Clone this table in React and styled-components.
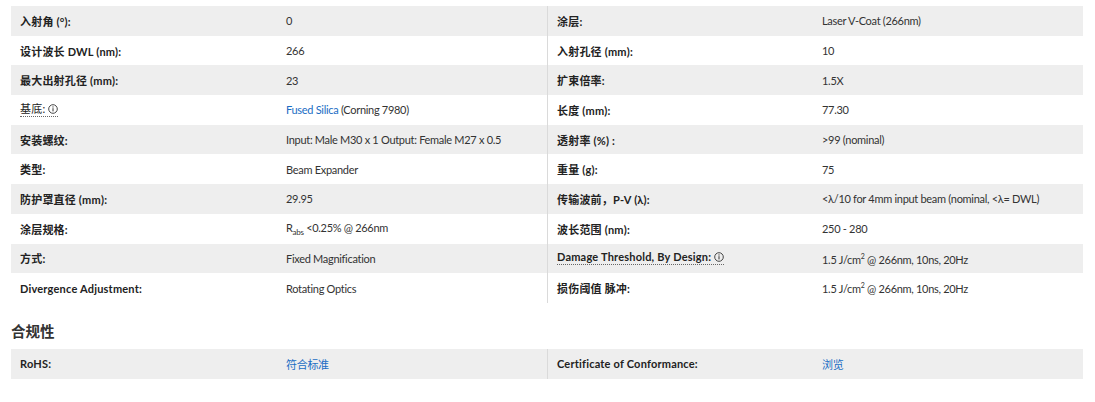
import React from "react";
import styled, { createGlobalStyle } from "styled-components";

const Global = createGlobalStyle`
  html, body { margin: 0; padding: 0; background: #fff; }
  body { font-family: Lato, "Noto Sans CJK SC", sans-serif; color: #333; }
`;

const Page = styled.div`
  padding: 6px 12px 0 11px;
  width: 1072px;
`;

const Table = styled.div`
  display: flex;
  flex-direction: column;
`;

const Row = styled.div`
  display: grid;
  grid-template-columns: 266px 270px 266px 270px;
  height: 29.7px;
  background: ${(p) => (p.$striped ? "#eeeeee" : "#ffffff")};
`;

const Cell = styled.div`
  display: flex;
  align-items: center;
  padding-left: 9px;
  border-left: ${(p) => (p.$divider ? "1px solid #dadada" : "none")};
  font-size: 11px;
  color: ${(p) => (p.$label ? "#222" : "#333")};
  font-weight: ${(p) => (p.$label ? 700 : 400)};
  letter-spacing: ${(p) => (p.$label ? "0.2px" : "-0.3px")};
  white-space: nowrap;
`;

const Tip = styled.span`
  display: inline-flex;
  align-items: center;
  gap: 3px;
  border-bottom: 1px dotted #666;
  padding-bottom: 1px;
  line-height: 12px;
  font-weight: ${(p) => (p.$light ? 400 : 700)};
`;

const Link = styled.a`
  color: #1a6dc4;
  text-decoration: none;
`;

const Sub = styled.sub`
  font-size: 8px;
`;

const Sup = styled.sup`
  font-size: 7px;
`;

const Heading = styled.h3`
  margin: 20px 0 8px;
  font-size: 14.5px;
  font-weight: 700;
  color: #333;
  line-height: 18px;
`;

const InfoIcon = () => (
  <svg width="10" height="10" viewBox="0 0 10 10">
    <circle cx="5" cy="5" r="4.3" fill="none" stroke="#333" strokeWidth="0.9" />
    <line x1="5" y1="4.2" x2="5" y2="7.4" stroke="#333" strokeWidth="1" />
    <circle cx="5" cy="2.9" r="0.6" fill="#333" />
  </svg>
);

const rows = [
  ["入射角 (°):", "0", "涂层:", "Laser V-Coat (266nm)"],
  ["设计波长 DWL (nm):", "266", "入射孔径 (mm):", "10"],
  ["最大出射孔径 (mm):", "23", "扩束倍率:", "1.5X"],
  [
    <Tip key="a" $light>基底: <InfoIcon /></Tip>,
    <span key="b"><Link href="#">Fused Silica</Link> (Corning 7980)</span>,
    "长度 (mm):",
    "77.30",
  ],
  ["安装螺纹:", "Input: Male M30 x 1 Output: Female M27 x 0.5", "透射率 (%) :", ">99 (nominal)"],
  ["类型:", "Beam Expander", "重量 (g):", "75"],
  ["防护罩直径 (mm):", "29.95", "传输波前，P-V (λ):", "<λ/10 for 4mm input beam (nominal, <λ= DWL)"],
  [
    "涂层规格:",
    <span key="r">R<Sub>abs</Sub> &lt;0.25% @ 266nm</span>,
    "波长范围 (nm):",
    "250 - 280",
  ],
  [
    "方式:",
    "Fixed Magnification",
    <Tip key="d">Damage Threshold, By Design: <InfoIcon /></Tip>,
    <span key="e">1.5 J/cm<Sup>2</Sup> @ 266nm, 10ns, 20Hz</span>,
  ],
  [
    "Divergence Adjustment:",
    "Rotating Optics",
    "损伤阈值 脉冲:",
    <span key="f">1.5 J/cm<Sup>2</Sup> @ 266nm, 10ns, 20Hz</span>,
  ],
];

export default function App() {
  return (
    <Page>
      <Global />
      <Table>
        {rows.map((r, i) => (
          <Row key={i} $striped={i % 2 === 0}>
            <Cell $label>{r[0]}</Cell>
            <Cell>{r[1]}</Cell>
            <Cell $label $divider>{r[2]}</Cell>
            <Cell>{r[3]}</Cell>
          </Row>
        ))}
      </Table>
      <Heading>合规性</Heading>
      <Table>
        <Row $striped>
          <Cell $label>RoHS:</Cell>
          <Cell><Link href="#">符合标准</Link></Cell>
          <Cell $label $divider>Certificate of Conformance:</Cell>
          <Cell><Link href="#">浏览</Link></Cell>
        </Row>
      </Table>
    </Page>
  );
}
